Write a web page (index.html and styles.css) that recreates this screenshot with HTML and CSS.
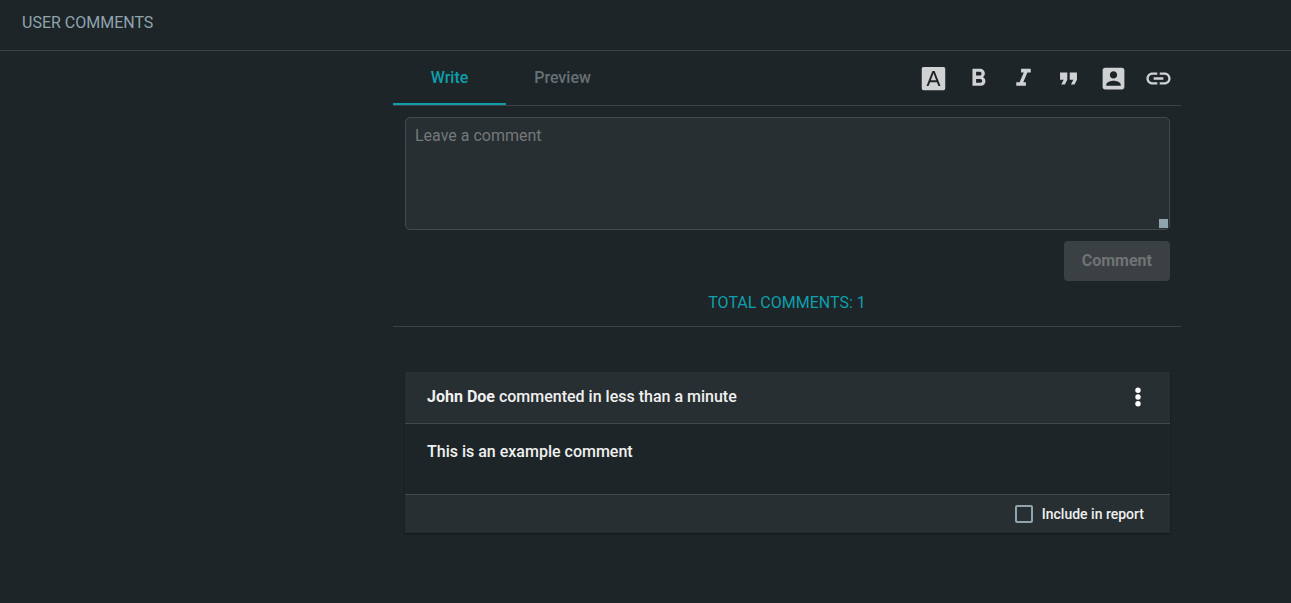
FILE: index.html
```html
<!DOCTYPE html>
<html lang="en">
<head>
<meta charset="utf-8">
<meta name="viewport" content="width=device-width, initial-scale=1">
<title>User comments</title>
<link rel="stylesheet" href="styles.css">
</head>
<body>
<header class="page-header"><h1 class="page-title">USER COMMENTS</h1></header>
<main class="layout">
  <section class="comments">
    <div class="editor-bar">
      <div class="tabs" role="tablist">
        <button class="tab tab-active" type="button" role="tab" aria-selected="true">Write</button>
        <button class="tab" type="button" role="tab" aria-selected="false">Preview</button>
      </div>
      <div class="toolbar">
        <button class="tool" type="button" aria-label="Text style"><svg class="tool-icon" viewBox="0 0 24 24"><path fill-rule="evenodd" d="M3.700 2.400H20.300Q21.700 2.400 21.700 3.800V20.300Q21.700 21.700 20.300 21.700H3.700Q2.300 21.700 2.300 20.300V3.800Q2.300 2.400 3.700 2.400ZM11.100 5.800 6.200 18.300H7.900L9.200 15H14.800L16.100 18.300H17.800L12.900 5.800ZM12 7.600 14.200 13.500H9.800Z"/></svg></button>
        <button class="tool" type="button" aria-label="Bold"><svg class="tool-icon" viewBox="0 0 24 24"><path d="M15.600 10.790c.970-.670 1.650-1.770 1.650-2.790 0-2.260-1.750-4-4-4H7v14h7.040c2.090 0 3.710-1.700 3.710-3.790 0-1.520-.860-2.820-2.150-3.420zM10 6.500h3c.830 0 1.500.670 1.500 1.500s-.670 1.500-1.500 1.500h-3v-3zm3.500 9H10v-3h3.500c.830 0 1.500.670 1.500 1.500s-.670 1.500-1.500 1.500z"/></svg></button>
        <button class="tool" type="button" aria-label="Italic"><svg class="tool-icon" viewBox="0 0 24 24"><path d="M10 4v3h2.210l-3.420 8H6v3h8v-3h-2.210l3.420-8H18V4z"/></svg></button>
        <button class="tool" type="button" aria-label="Quote"><svg class="tool-icon" viewBox="0 0 24 24"><path d="M6 17h3l2-4V7H5v6h3zm8 0h3l2-4V7h-6v6h3z"/></svg></button>
        <button class="tool" type="button" aria-label="Mention user"><svg class="tool-icon" viewBox="0 0 24 24"><path d="M3 5v14c0 1.100.890 2 2 2h14c1.100 0 2-.900 2-2V5c0-1.100-.900-2-2-2H5c-1.110 0-2 .900-2 2zm12 4c0 1.660-1.340 3-3 3s-3-1.340-3-3 1.340-3 3-3 3 1.340 3 3zm-9 8c0-2 4-3.100 6-3.100s6 1.100 6 3.100v1H6v-1z"/></svg></button>
        <button class="tool" type="button" aria-label="Link"><svg class="tool-icon" viewBox="0 0 24 24"><path d="M3.900 12c0-1.710 1.390-3.100 3.100-3.100h4V7H7c-2.760 0-5 2.240-5 5s2.240 5 5 5h4v-1.900H7c-1.710 0-3.100-1.390-3.100-3.100zM8 13h8v-2H8v2zm9-6h-4v1.900h4c1.710 0 3.100 1.390 3.100 3.100s-1.390 3.100-3.100 3.100h-4V17h4c2.760 0 5-2.240 5-5s-2.240-5-5-5z"/></svg></button>
      </div>
    </div>
    <form class="editor">
      <textarea class="comment-input" aria-label="Comment" placeholder="Leave a comment"></textarea>
      <button class="submit" type="submit" disabled>Comment</button>
    </form>
    <h2 class="total">TOTAL COMMENTS: 1</h2>
    <article class="card">
      <header class="card-header">
        <p class="byline"><strong>John Doe</strong> commented in less than a minute</p>
        <button class="menu" type="button" aria-label="Comment actions"><svg class="menu-icon" viewBox="0 0 24 24"><circle cx="12" cy="5.200" r="2.700"/><circle cx="12" cy="12" r="2.700"/><circle cx="12" cy="18.800" r="2.700"/></svg></button>
      </header>
      <p class="card-body">This is an example comment</p>
      <footer class="card-footer">
        <label class="include"><input class="check" type="checkbox">Include in report</label>
      </footer>
    </article>
  </section>
</main>
</body>
</html>
```

FILE: styles.css
```css
* { box-sizing: border-box; }
body {
  margin: 0;
  background: #1e2528;
  color: #f0f0f0;
  font: 16px/24px Roboto, "Liberation Sans", sans-serif;
}
button, textarea { font: inherit; }
button { border: 0; padding: 0; background: none; color: inherit; }

.page-header { padding: 11px 22px 15px; border-bottom: 1px solid #3d4244; }
.page-title { margin: 0; font-size: 16px; font-weight: 400; color: #90a4ae; }

.layout { display: grid; grid-template-columns: 393fr minmax(0, 788fr) 110fr; }
.comments { grid-column: 2; }

.editor-bar { display: flex; justify-content: space-between; border-bottom: 1px solid #3d4244; }
.tabs { display: flex; }
.tab {
  width: 113px;
  padding: 15px 0 13px;
  border-bottom: 2px solid transparent;
  color: #667177;
  font-weight: 500;
}
.tab-active { color: #0f9fac; border-color: #0f9fac; }
.toolbar { display: flex; }
.tool { display: flex; align-items: center; justify-content: center; width: 45px; }
.tool-icon { width: 29px; height: 29px; fill: #cfd1d2; }

.editor { display: flex; flex-direction: column; gap: 11px; padding: 11px 11px 10px 12px; }
.comment-input {
  width: 100%;
  height: 113px;
  padding: 6px 9px;
  border: 1px solid #43494c;
  border-radius: 5px;
  background: #282f32;
  color: #f0f0f0;
  resize: vertical;
}
.comment-input::placeholder { color: #757879; }
.comment-input::-webkit-resizer {
  background: linear-gradient(#90a4ae, #90a4ae) 5px 5px / 9px 9px no-repeat;
}
.submit {
  align-self: flex-end;
  padding: 8px 18px;
  border-radius: 4px;
  background: #3b4043;
  color: #6f7375;
  font-weight: 700;
}

.total {
  margin: 0 0 45px;
  padding-bottom: 11px;
  border-bottom: 1px solid #3d4244;
  color: #0f9fac;
  font-size: 16px;
  font-weight: 400;
  text-align: center;
}

.card { margin: 0 11px 24px 12px; box-shadow: 0 1px 2px rgba(0, 0, 0, 0.4); }
.card-header {
  display: flex;
  align-items: center;
  justify-content: space-between;
  padding: 13px 20px 14px 22px;
  background: #282f32;
  border-bottom: 1px solid #43494c;
}
.byline { margin: 0; font-weight: 500; }
.menu { display: flex; }
.menu-icon { width: 24px; height: 24px; fill: #ffffff; }
.card-body { margin: 0; padding: 16px 22px 30px; font-weight: 500; }
.card-footer {
  display: flex;
  justify-content: flex-end;
  padding: 7px 26px 7px 22px;
  background: #282f32;
  border-top: 1px solid #43494c;
}
.include { display: flex; align-items: center; gap: 9px; font-size: 14px; font-weight: 500; }
.check {
  appearance: none;
  width: 18px;
  height: 18px;
  margin: 0;
  border: 2px solid #90a4ae;
  border-radius: 2px;
}
.check:checked { background: #0f9fac; }
```
